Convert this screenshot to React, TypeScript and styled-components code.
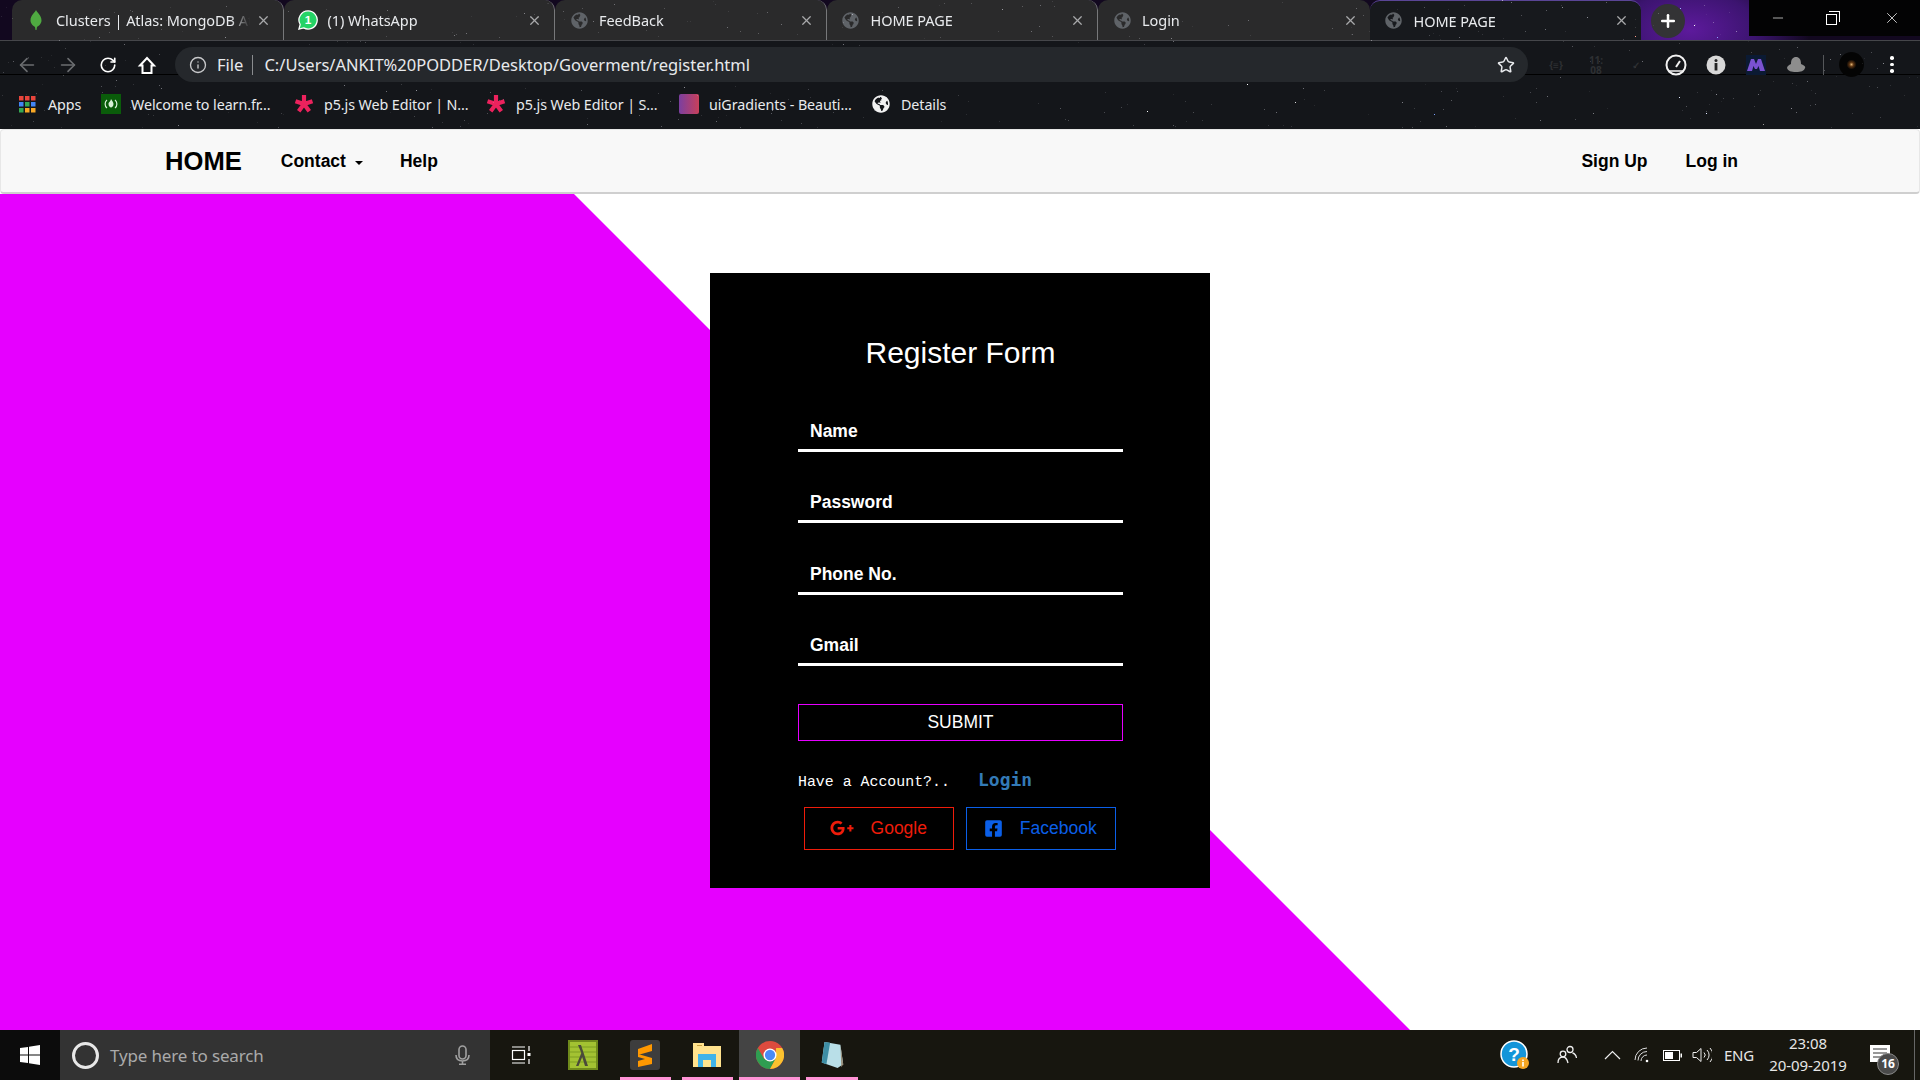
import React from "react";
import styled, { createGlobalStyle } from "styled-components";
import { ArrowLeft, ArrowRight, RotateCw, Info, Star, X, Minus, Plus } from "lucide-react";
import { FaGlobeAmericas, FaGooglePlusG, FaFacebookSquare } from "react-icons/fa";

const UI_FONT = `"Noto Sans", "Open Sans", sans-serif`;
const PAGE_FONT = `"Liberation Sans", Arial, sans-serif`;
const MAGENTA = "#e600ff";

const GlobalStyle = createGlobalStyle`
  html, body {
    margin: 0;
    padding: 0;
    background: #fff;
  }
  * {
    box-sizing: border-box;
  }
`;

// little seeded generator so the star field is the same on every load
const makeStars = (count: number): string => {
  let seed = 77;
  const next = () => {
    seed = (seed * 16807) % 2147483647;
    return seed / 2147483647;
  };
  const stars: string[] = [];
  for (let i = 0; i < count; i++) {
    const x = Math.round(next() * 1920);
    const y = Math.round(next() * 128);
    const alpha = next() * next() * 0.55 + 0.08;
    const inAddress = y > 45 && y < 84 && x > 170 && x < 1530;
    const inControls = y < 38 && x > 1748;
    if (!inAddress && !inControls) {
      stars.push(`${x}px ${y}px 0 0 rgba(235,235,245,${alpha.toFixed(2)})`);
    }
  }
  return stars
    .concat([
      "1147px 111px 0 0 #fff",
      "1679px 97px 0 0 #dfe8ff",
      "1434px 114px 0 0 #7aa0ff",
      "1706px 113px 0 0 #dfe8ff",
      "1763px 124px 0 0 #999",
      "1295px 102px 0 0 #ddd",
      "1247px 84px 0 0 #fff",
      "1635px 36px 0 0 #ff9b8a",
      "1680px 8px 0 0 #9db0ff",
      "1694px 25px 0 0 #fff",
      "1717px 37px 0 0 #8fa0ff",
    ])
    .join(",");
};

const Screen = styled.div`
  width: 1920px;
  height: 1080px;
  display: flex;
  flex-direction: column;
  overflow: hidden;
  background: #fff;
`;

/* ---------- browser chrome ---------- */

const BrowserChrome = styled.header`
  position: relative;
  height: 129px;
  flex: none;
  background: #14161a;
  font-family: ${UI_FONT};
  color: #e8eaed;
  overflow: hidden;

  &::after {
    content: "";
    position: absolute;
    top: 0;
    left: 0;
    width: 1px;
    height: 1px;
    box-shadow: ${makeStars(520)};
    pointer-events: none;
  }
`;

const TabStrip = styled.div`
  height: 41px;
  display: flex;
  padding-left: 12px;
  background: radial-gradient(
      ellipse 120px 70px at 1690px 30px,
      #5d1a9c 0%,
      #3c1470 55%,
      rgba(30, 12, 60, 0) 100%
    ),
    #12081f;
  border-bottom: 1px solid #45464a;
`;

const Tab = styled.div<{ $active?: boolean; $last?: boolean }>`
  width: 271.5px;
  height: 40px;
  padding: 0 12px 0 14px;
  display: flex;
  align-items: center;
  background: ${({ $active }) => ($active ? "#17191d" : "#2a2a2b")};
  border-radius: 10px 10px 0 0;
  border-top: ${({ $active }) => ($active ? "1px solid #5a4596" : "none")};
  border-right: ${({ $last }) => ($last ? "none" : "1px solid #77787a")};
  background-clip: padding-box;
`;

const TabIcon = styled.span`
  width: 20px;
  height: 20px;
  margin-right: 10px;
  flex: none;
  display: flex;
  align-items: center;
  justify-content: center;
  color: #5f6368;
`;

const TabTitle = styled.span`
  flex: 1;
  font-size: 14.5px;
  white-space: nowrap;
  overflow: hidden;
  letter-spacing: -0.05px;
  -webkit-mask-image: linear-gradient(to right, #000 90%, transparent 100%);
`;

const TabClose = styled(X)`
  flex: none;
  margin-left: 6px;
  color: #a8a9ab;
`;

const NewTab = styled.span`
  width: 34px;
  height: 34px;
  margin: 4px 0 0 10px;
  flex: none;
  border-radius: 50%;
  background: #333335;
  display: flex;
  align-items: center;
  justify-content: center;
  color: #fff;
`;

const WindowControls = styled.div`
  margin-left: auto;
  width: 171px;
  height: 36px;
  background: #030304;
  display: grid;
  grid-template-columns: repeat(3, 1fr);
  justify-items: center;
  align-items: center;
  color: #fff;
`;

const RestoreIcon = styled.span`
  position: relative;
  width: 11px;
  height: 11px;
  border: 1px solid #fff;
  background: #030304;
  margin: 3px 6px 0 0;

  &::before {
    content: "";
    position: absolute;
    top: -4px;
    right: -4px;
    width: 10px;
    height: 10px;
    border: 1px solid #fff;
    border-left: none;
    border-bottom: none;
  }
`;

const Toolbar = styled.div`
  height: 41px;
  display: flex;
  align-items: flex-start;
  padding-top: 6px;
  background: linear-gradient(
    to bottom,
    transparent 33px,
    #000 33px,
    #000 34px,
    transparent 34px
  );
`;

const NavButton = styled.span<{ $dim?: boolean; $width: number }>`
  width: ${({ $width }) => $width}px;
  height: 35px;
  flex: none;
  display: flex;
  align-items: center;
  justify-content: center;
  color: ${({ $dim }) => ($dim ? "#6b6d70" : "#fff")};
`;

const AddressBar = styled.div`
  width: 1353px;
  height: 35px;
  margin: 0 8px 0 15px;
  flex: none;
  padding: 0 13px 0 14px;
  display: flex;
  align-items: center;
  border-radius: 18px;
  background: #25282c;
  font-size: 16.5px;
  position: relative;
  z-index: 1;
`;

const AddressInfo = styled(Info)`
  color: #c8c9cb;
  margin-right: 10px;
`;

const FileLabel = styled.span`
  padding-right: 9px;
  margin-right: 11px;
  border-right: 1px solid #8a8c8f;
  line-height: 20px;
`;

const Url = styled.span`
  white-space: nowrap;
`;

const AddressStar = styled(Star)`
  margin-left: auto;
`;

const FadedBadge = styled.span`
  width: 40px;
  flex: none;
  text-align: center;
  font-size: 10px;
  line-height: 10px;
  color: #2e3033;
  align-self: center;
  font-weight: 700;
`;

const ExtensionSlot = styled.span`
  width: 40px;
  height: 35px;
  flex: none;
  display: flex;
  align-items: center;
  justify-content: center;
`;

const ToolbarDivider = styled.span`
  width: 1px;
  height: 20px;
  align-self: center;
  background: #55575a;
  flex: none;
  margin: 0 7px;
`;

const Avatar = styled.span`
  width: 25px;
  height: 25px;
  border-radius: 50%;
  background: radial-gradient(circle at 50% 50%, #e0b070 0, #5a3312 12%, #040404 28%);
`;

const MoreDots = styled.span`
  display: grid;
  gap: 3px;
  margin-left: 19px;
  align-self: center;

  i {
    display: block;
    width: 3.5px;
    height: 3.5px;
    background: #fff;
    border-radius: 50%;
  }
`;

const BookmarkBar = styled.nav`
  height: 46px;
  display: flex;
  align-items: center;
  padding: 0 0 2px 19px;
  font-size: 14.3px;
  letter-spacing: -0.08px;
`;

const Bookmark = styled.span<{ $width: number; $gap?: number }>`
  width: ${({ $width }) => $width}px;
  display: flex;
  align-items: center;
  gap: ${({ $gap }) => $gap ?? 10}px;
  flex: none;
  white-space: nowrap;
`;

const GradientIcon = styled.span`
  width: 20px;
  height: 20px;
  flex: none;
  border-radius: 2px;
  background: linear-gradient(to right, #7b3fa0, #c8405a);
`;

const WhiteGlobe = styled(FaGlobeAmericas)`
  color: #f2f2f2;
  flex: none;
`;

/* ---------- site navbar ---------- */

const Navbar = styled.div`
  height: 65px;
  flex: none;
  display: flex;
  align-items: center;
  padding: 0 181px 0 164px;
  background: #f8f8f8;
  border: 1px solid #e7e7e7;
  border-bottom: 2px solid #cfcfcf;
  border-radius: 4px;
  font-family: ${PAGE_FONT};
  font-weight: 700;
  font-size: 17.5px;
  color: #000;
`;

const Brand = styled.span`
  font-size: 25.6px;
  margin-right: 39px;
`;

const NavLink = styled.span<{ $gap: number }>`
  display: inline-flex;
  align-items: center;
  margin-right: ${({ $gap }) => $gap}px;
`;

const Caret = styled.span`
  width: 0;
  height: 0;
  margin-left: 9px;
  margin-top: 3px;
  border-top: 4px solid #000;
  border-left: 4.5px solid transparent;
  border-right: 4.5px solid transparent;
`;

const NavRight = styled.div`
  margin-left: auto;
  display: flex;
`;

/* ---------- page body ---------- */

const Hero = styled.main`
  position: relative;
  flex: 1;
  display: flex;
  justify-content: center;
  align-items: flex-start;
  padding-top: 79px;
  background: #fff;
  font-family: ${PAGE_FONT};

  &::before {
    content: "";
    position: absolute;
    inset: 0;
    background: ${MAGENTA};
    clip-path: polygon(0 0, 574px 0, 1410px 100%, 0 100%);
  }
`;

const Card = styled.section`
  position: relative;
  width: 500px;
  height: 615px;
  padding: 63px 87px 0 88px;
  display: flex;
  flex-direction: column;
  background: #000;
  color: #fff;
`;

const Title = styled.h1`
  margin: 0 0 42px;
  font-size: 30px;
  line-height: 34px;
  font-weight: 400;
  text-align: center;
`;

const Fields = styled.div`
  display: flex;
  flex-direction: column;
  gap: 31.33px;
`;

const Field = styled.div`
  height: 40px;
  padding: 0 0 6px 12px;
  display: flex;
  align-items: flex-end;
  border-bottom: 3px solid #fff;
  font-size: 17.5px;
  font-weight: 700;
  line-height: 24px;
`;

const Submit = styled.button`
  height: 37px;
  margin-top: 38px;
  padding: 0;
  background: #000;
  border: 1px solid ${MAGENTA};
  color: #fff;
  font-family: ${PAGE_FONT};
  font-size: 17.5px;
`;

const AccountRow = styled.div`
  height: 24px;
  margin-top: 27px;
  display: flex;
  align-items: center;
`;

const AccountText = styled.span`
  width: 180px;
  font-family: "Liberation Mono", "Courier New", monospace;
  font-size: 14.9px;
  padding-top: 4px;
`;

const LoginLink = styled.a`
  font-family: "DejaVu Sans Mono", "Liberation Mono", monospace;
  font-size: 18px;
  font-weight: 700;
  color: #337ab7;
`;

const SocialRow = styled.div`
  display: flex;
  gap: 12px;
  margin-top: 15px;
  padding: 0 7px 0 6px;
`;

const SocialButton = styled.button<{ $color: string }>`
  width: 150px;
  height: 43px;
  padding: 0 1px 0 0;
  display: flex;
  align-items: center;
  justify-content: center;
  gap: 16.5px;
  background: #000;
  border: 1px solid ${({ $color }) => $color};
  color: ${({ $color }) => $color};
  font-family: ${PAGE_FONT};
  font-size: 17.5px;
`;

/* ---------- taskbar ---------- */

const Taskbar = styled.footer`
  height: 50px;
  flex: none;
  display: flex;
  align-items: stretch;
  background: #17160f;
  font-family: ${UI_FONT};
  color: #e6e6e6;
`;

const StartButton = styled.span`
  width: 60px;
  flex: none;
  background: #0c0c0c;
  display: flex;
  align-items: center;
  justify-content: center;
`;

const SearchBox = styled.div`
  width: 430px;
  flex: none;
  background: #333;
  display: flex;
  align-items: center;
  padding-left: 12px;
  color: #aaa;
  font-size: 17px;
`;

const SearchRing = styled.span`
  width: 27px;
  height: 27px;
  margin-right: 11px;
  border: 3.5px solid #e8e8e8;
  border-radius: 50%;
  flex: none;
`;

const SearchText = styled.span`
  flex: 1;
  letter-spacing: -0.15px;
`;

const SearchMicWrap = styled.span`
  margin-right: 20px;
  display: flex;
`;

const TaskIcon = styled.span<{ $running?: boolean; $active?: boolean }>`
  position: relative;
  width: 61.25px;
  flex: none;
  margin-right: 1px;
  display: flex;
  align-items: center;
  justify-content: center;
  background: ${({ $active }) => ($active ? "#444" : "transparent")};

  &::after {
    content: "";
    display: ${({ $running }) => ($running ? "block" : "none")};
    position: absolute;
    left: ${({ $active }) => ($active ? 0 : 5)}px;
    right: ${({ $active }) => ($active ? 0 : 5)}px;
    bottom: 0;
    height: 3px;
    background: #ff93d6;
  }
`;

const Tray = styled.div`
  margin-left: auto;
  display: flex;
  align-items: center;
`;

const TraySlot = styled.span<{ $width: number }>`
  width: ${({ $width }) => $width}px;
  flex: none;
  display: flex;
  align-items: center;
  justify-content: center;
`;

const Lang = styled.span`
  width: 42px;
  margin: 0 2px 0 1px;
  font-size: 15px;
  letter-spacing: -0.2px;
  text-align: center;
  flex: none;
`;

const Clock = styled.div`
  width: 92px;
  flex: none;
  padding-bottom: 2px;
  text-align: center;
  font-size: 15px;
  line-height: 22px;
  letter-spacing: -0.1px;
`;

const NotifyWrap = styled.span`
  position: relative;
  width: 60px;
  height: 50px;
  flex: none;
  display: flex;
  align-items: center;
  justify-content: center;
  padding: 0 8px 3px 0;
`;

const NotifyBadge = styled.span`
  position: absolute;
  left: 23px;
  top: 23px;
  width: 22px;
  height: 22px;
  border-radius: 50%;
  background: #4a4a4a;
  border: 1px solid #888;
  color: #fff;
  font-size: 12px;
  font-weight: 700;
  line-height: 19px;
  text-align: center;
`;

const EndStrip = styled.span`
  width: 1px;
  height: 50px;
  background: #666;
  margin-right: 5px;
  flex: none;
`;

/* ---------- drawn icons ---------- */

const MongoLeaf = () => (
  <svg width="12" height="20" viewBox="0 0 12 20">
    <path d="M6 0c1 2.500 5.500 5 5.500 10.500 0 3.500-3 5.500-4.500 6.500l-.5 3h-1l-.5-3C3.500 16 .5 14 .5 10.500.5 5 5 2.500 6 0z" fill="#4faa41" />
  </svg>
);

const WhatsappIcon = () => (
  <svg width="22" height="22" viewBox="0 0 22 22">
    <path d="M11 1a10 10 0 0 0-8.600 15L1 21l5.200-1.300A10 10 0 1 0 11 1z" fill="#25d366" stroke="#fff" strokeWidth="1.400" />
    <text x="11" y="15.500" textAnchor="middle" fontSize="13" fontWeight="700" fill="#fff" fontFamily="Liberation Sans">1</text>
  </svg>
);

const HomeOutline = () => (
  <svg width="20" height="20" viewBox="0 0 20 20" fill="none" stroke="#fff" strokeWidth="2" strokeLinejoin="miter">
    <path d="M3 10.500L10 3l7 7.500h-2.500V18h-9v-7.500z" />
  </svg>
);

const AppsGrid = () => {
  const colors = ["#e8453c", "#e8453c", "#e8453c", "#4285f4", "#34a853", "#4285f4", "#34a853", "#f9a825", "#f9a825"];
  return (
    <svg width="17" height="17" viewBox="0 0 17 17">
      {colors.map((c, i) => (
        <rect key={i} x={(i % 3) * 6} y={Math.floor(i / 3) * 6} width="4.500" height="4.500" fill={c} />
      ))}
    </svg>
  );
};

const FreeCodeIcon = () => (
  <svg width="20" height="20" viewBox="0 0 20 20" fill="none">
    <rect width="20" height="20" fill="#0a5c0a" />
    <path d="M6 6c-2.500 2-2.500 6 0 8M14 6c2.500 2 2.500 6 0 8" stroke="#d7f0d7" strokeWidth="1.200" />
    <path d="M10 5c1 2 2.500 3 2.500 5S11 13.500 10 13.500 7.500 12 7.500 10 9.500 8 10 5z" fill="#d7f0d7" />
  </svg>
);

const P5Star = () => (
  <svg width="20" height="20" viewBox="0 0 20 20" stroke="#ed225d" strokeWidth="4.200">
    <path d="M10 1v9M10 10l8.500-2.800M10 10l5.300 7.300M10 10l-5.300 7.300M10 10L1.500 7.200" />
  </svg>
);

const Speedo = () => (
  <svg width="22" height="22" viewBox="0 0 22 22" fill="none">
    <circle cx="11" cy="11" r="9.500" stroke="#f2f2f2" strokeWidth="2" />
    <path d="M11 13l4-6" stroke="#f2f2f2" strokeWidth="2" />
    <path d="M3 17h16" stroke="#f2f2f2" strokeWidth="1.500" />
  </svg>
);

const InfoBadge = () => (
  <svg width="20" height="20" viewBox="0 0 20 20">
    <circle cx="10" cy="10" r="9.500" fill="#d8d8d8" />
    <rect x="8.600" y="8" width="2.800" height="7.500" fill="#222" />
    <circle cx="10" cy="5.500" r="1.500" fill="#222" />
  </svg>
);

const MBadge = () => (
  <svg width="20" height="20" viewBox="0 0 20 20">
    <rect width="20" height="20" fill="#0b1a33" />
    <path d="M1 16L5 4h3l2 5 2-5h3l4 12h-5l-1.500-5-1.500 3H9l-1.500-3L6 16z" fill="#7a52d0" />
  </svg>
);

const Hat = () => (
  <svg width="20" height="16" viewBox="0 0 20 16">
    <path d="M5 7C5 2 7 0 10 0s5 2 5 7c3 1 5 3 4 4-1 3-4 4-9 4-5 0-8-1-9-4 0-2 2-3 4-4z" fill="#8d8d8d" />
  </svg>
);

const WindowsLogo = () => (
  <svg width="20" height="20" viewBox="0 0 20 20" fill="#fff">
    <path d="M0 3l8-1.100v7.600H0zM9 1.700L20 0v9.500H9zM0 10.500h8v7.600L0 17zM9 10.500h11V20L9 18.300z" />
  </svg>
);

const MicIcon = () => (
  <svg width="15" height="20" viewBox="0 0 15 20" fill="none" stroke="#a0a0a0" strokeWidth="1.600">
    <rect x="4" y="1" width="7" height="13" rx="3.500" />
    <path d="M1 10c0 4 2.500 6 6.500 6s6.500-2 6.500-6M7.500 16v3M4 19.200h7" />
  </svg>
);

const TaskView = () => (
  <svg width="20" height="20" viewBox="0 0 20 20" fill="none" stroke="#fff" strokeWidth="1.200">
    <rect x="1.500" y="5.500" width="12" height="9" />
    <path d="M1 2h13M1 18h13M18 1v5M18 14v5" />
    <rect x="16.500" y="8" width="3" height="3" fill="#fff" stroke="none" />
  </svg>
);

const LambdaIcon = () => (
  <svg width="30" height="30" viewBox="0 0 30 30">
    <rect width="30" height="30" fill="#6f8a1b" />
    <rect x="2" y="2" width="26" height="26" fill="#a3c232" />
    <path d="M2 7h26M2 12h26M2 17h26M2 22h26" stroke="#8bab27" strokeWidth="1.600" />
    <path d="M10 5h3l7 21h-3l-2.800-9L10.500 26H8l5.300-13z" fill="#4a4a3a" />
  </svg>
);

const SublimeIcon = () => (
  <svg width="30" height="30" viewBox="0 0 30 30">
    <rect width="30" height="30" rx="3" fill="#3d3d3d" />
    <path d="M22 4v7L8 15V9zM8 14l14 4v6L8 27v-6l7-2-7-2z" fill="#ff9800" />
  </svg>
);

const FolderIcon = () => (
  <svg width="28" height="24" viewBox="0 0 28 24">
    <path d="M0 0h11v3h17v21H0z" fill="#ffe28d" />
    <path d="M4 2h5v1H4z" fill="#c9a040" />
    <path d="M5 11h18v13h-5v-7h-8v7H5z" fill="#3fb3ea" />
  </svg>
);

const ChromeIcon = () => (
  <svg width="28" height="28" viewBox="-15 -15 30 30">
    <circle r="15" fill="#dd4b3e" />
    <path d="M-13 -7.500A15 15 0 0 0 0 15L6.500 3.800 0 7.000-6.500 3.800z" fill="#2f9e51" />
    <path d="M13-7.500A15 15 0 0 1 0 15L6 4 6.500-7.500z" fill="#fbc22f" />
    <circle r="7" fill="#fff" />
    <circle r="5.500" fill="#4b8bf5" />
  </svg>
);

const NotesIcon = () => (
  <svg width="28" height="28" viewBox="0 0 28 30">
    <path d="M6 1l17 3 3 21-6 4-17-6z" fill="#b9dfe8" />
    <path d="M3 23l3-22 6 1-4 23z" fill="#3e8ea5" />
    <path d="M23 4l3 21-2 3z" fill="#9a8f7a" />
  </svg>
);

const HelpIcon = () => (
  <svg width="30" height="30" viewBox="0 0 30 30">
    <circle cx="14" cy="14" r="13" fill="#1495d9" stroke="#fff" strokeWidth="1.500" />
    <text x="14" y="20.500" textAnchor="middle" fontSize="19" fontWeight="700" fill="#fff" fontFamily="Liberation Sans">?</text>
    <circle cx="23" cy="23" r="6" fill="#f5a623" />
    <rect x="22.200" y="22" width="1.600" height="4.500" fill="#fff" />
    <rect x="22.200" y="19.500" width="1.600" height="1.600" fill="#fff" />
  </svg>
);

const PeopleIcon = () => (
  <svg width="20" height="20" viewBox="0 0 20 20" fill="none" stroke="#eee" strokeWidth="1.300">
    <circle cx="13" cy="4.500" r="3" />
    <circle cx="6" cy="9" r="2.800" />
    <path d="M1 18c0-4 2-6 5-6s4 2 5 6M15.500 8c2 .5 3.500 2 4 5" />
  </svg>
);

const ChevronIcon = () => (
  <svg width="17" height="10" viewBox="0 0 17 10" fill="none" stroke="#eee" strokeWidth="1.200">
    <path d="M1 9l7.500-7.500L16 9" />
  </svg>
);

const WifiIcon = () => (
  <svg width="16" height="16" viewBox="0 0 16 16" fill="none" stroke="#ddd" strokeWidth="1">
    <path d="M1 13a12 12 0 0 1 12-12M4 13.500a9 9 0 0 1 9-9M7 14a6 6 0 0 1 6-6" />
    <circle cx="13" cy="14" r="1.300" fill="#fff" stroke="none" />
  </svg>
);

const BatteryIcon = () => (
  <svg width="19" height="11" viewBox="0 0 19 11">
    <rect x="0.500" y="0.500" width="16" height="10" fill="none" stroke="#fff" />
    <rect x="2" y="2" width="8" height="7" fill="#fff" />
    <rect x="17.500" y="3.500" width="1.500" height="4" fill="#fff" />
  </svg>
);

const SpeakerIcon = () => (
  <svg width="20" height="16" viewBox="0 0 20 16" fill="none" stroke="#eee" strokeWidth="1">
    <path d="M1 5.500h3.500L9 1.500v13l-4.500-4H1z" />
    <path d="M12 5.500a3.500 3.500 0 0 1 0 5M15 3a7 7 0 0 1 0 10M18 1a10 10 0 0 1 0 14" />
  </svg>
);

const NotifyIcon = () => (
  <svg width="20" height="17" viewBox="0 0 20 17">
    <rect width="20" height="17" fill="#fff" />
    <path d="M3 4h14M3 8h14M3 12h9" stroke="#333" strokeWidth="1.100" />
  </svg>
);

/* ---------- data ---------- */

const TABS: { title: string; icon: React.ReactNode }[] = [
  { title: "Clusters | Atlas: MongoDB Atlas", icon: <MongoLeaf /> },
  { title: "(1) WhatsApp", icon: <WhatsappIcon /> },
  { title: "FeedBack", icon: <FaGlobeAmericas size={17} /> },
  { title: "HOME PAGE", icon: <FaGlobeAmericas size={17} /> },
  { title: "Login", icon: <FaGlobeAmericas size={17} /> },
  { title: "HOME PAGE", icon: <FaGlobeAmericas size={17} /> },
];

const FIELDS = ["Name", "Password", "Phone No.", "Gmail"];

const App = () => (
  <Screen>
    <GlobalStyle />
    <BrowserChrome>
      <TabStrip>
        {TABS.map((tab, i) => (
          <Tab key={i} $active={i === 5} $last={i >= 4}>
            <TabIcon>{tab.icon}</TabIcon>
            <TabTitle>{tab.title}</TabTitle>
            <TabClose size={15} strokeWidth={2} />
          </Tab>
        ))}
        <NewTab>
          <Plus size={20} strokeWidth={3} />
        </NewTab>
        <WindowControls>
          <Minus size={16} strokeWidth={1} />
          <RestoreIcon />
          <X size={18} strokeWidth={1} />
        </WindowControls>
      </TabStrip>

      <Toolbar>
        <NavButton $dim $width={54}>
          <ArrowLeft size={22} strokeWidth={1.8} />
        </NavButton>
        <NavButton $dim $width={28}>
          <ArrowRight size={22} strokeWidth={1.8} />
        </NavButton>
        <NavButton $width={52}>
          <RotateCw size={18} strokeWidth={2.2} />
        </NavButton>
        <NavButton $width={26}>
          <HomeOutline />
        </NavButton>
        <AddressBar>
          <AddressInfo size={18} strokeWidth={1.8} />
          <FileLabel>File</FileLabel>
          <Url>C:/Users/ANKIT%20PODDER/Desktop/Goverment/register.html</Url>
          <AddressStar size={18} strokeWidth={2} />
        </AddressBar>
        <FadedBadge>{"{≡}"}</FadedBadge>
        <FadedBadge>
          11:
          <br />
          08
        </FadedBadge>
        <FadedBadge>✓</FadedBadge>
        <ExtensionSlot>
          <Speedo />
        </ExtensionSlot>
        <ExtensionSlot>
          <InfoBadge />
        </ExtensionSlot>
        <ExtensionSlot>
          <MBadge />
        </ExtensionSlot>
        <ExtensionSlot>
          <Hat />
        </ExtensionSlot>
        <ToolbarDivider />
        <ExtensionSlot>
          <Avatar />
        </ExtensionSlot>
        <MoreDots>
          <i />
          <i />
          <i />
        </MoreDots>
      </Toolbar>

      <BookmarkBar>
        <Bookmark $width={82} $gap={12}>
          <AppsGrid />
          Apps
        </Bookmark>
        <Bookmark $width={193}>
          <FreeCodeIcon />
          Welcome to learn.fr...
        </Bookmark>
        <Bookmark $width={192}>
          <P5Star />
          p5.js Web Editor | N...
        </Bookmark>
        <Bookmark $width={193}>
          <P5Star />
          p5.js Web Editor | S...
        </Bookmark>
        <Bookmark $width={193}>
          <GradientIcon />
          uiGradients - Beauti...
        </Bookmark>
        <Bookmark $width={70} $gap={11}>
          <WhiteGlobe size={18} />
          Details
        </Bookmark>
      </BookmarkBar>
    </BrowserChrome>

    <Navbar>
      <Brand>HOME</Brand>
      <NavLink $gap={37}>
        Contact
        <Caret />
      </NavLink>
      <NavLink $gap={0}>Help</NavLink>
      <NavRight>
        <NavLink $gap={38}>Sign Up</NavLink>
        <NavLink $gap={0}>Log in</NavLink>
      </NavRight>
    </Navbar>

    <Hero>
      <Card>
        <Title>Register Form</Title>
        <Fields>
          {FIELDS.map((name) => (
            <Field key={name}>{name}</Field>
          ))}
        </Fields>
        <Submit>SUBMIT</Submit>
        <AccountRow>
          <AccountText>Have a Account?..</AccountText>
          <LoginLink>Login</LoginLink>
        </AccountRow>
        <SocialRow>
          <SocialButton $color="#ee1c0a">
            <FaGooglePlusG size={24} />
            Google
          </SocialButton>
          <SocialButton $color="#0b5fe8">
            <FaFacebookSquare size={19} />
            Facebook
          </SocialButton>
        </SocialRow>
      </Card>
    </Hero>

    <Taskbar>
      <StartButton>
        <WindowsLogo />
      </StartButton>
      <SearchBox>
        <SearchRing />
        <SearchText>Type here to search</SearchText>
        <SearchMicWrap>
          <MicIcon />
        </SearchMicWrap>
      </SearchBox>
      <TaskIcon>
        <TaskView />
      </TaskIcon>
      <TaskIcon>
        <LambdaIcon />
      </TaskIcon>
      <TaskIcon $running>
        <SublimeIcon />
      </TaskIcon>
      <TaskIcon $running>
        <FolderIcon />
      </TaskIcon>
      <TaskIcon $running $active>
        <ChromeIcon />
      </TaskIcon>
      <TaskIcon $running>
        <NotesIcon />
      </TaskIcon>
      <Tray>
        <TraySlot $width={44}>
          <HelpIcon />
        </TraySlot>
        <TraySlot $width={60}>
          <PeopleIcon />
        </TraySlot>
        <TraySlot $width={30}>
          <ChevronIcon />
        </TraySlot>
        <TraySlot $width={30}>
          <WifiIcon />
        </TraySlot>
        <TraySlot $width={30}>
          <BatteryIcon />
        </TraySlot>
        <TraySlot $width={30}>
          <SpeakerIcon />
        </TraySlot>
        <Lang>ENG</Lang>
        <Clock>
          23:08
          <br />
          20-09-2019
        </Clock>
        <NotifyWrap>
          <NotifyIcon />
          <NotifyBadge>16</NotifyBadge>
        </NotifyWrap>
        <EndStrip />
      </Tray>
    </Taskbar>
  </Screen>
);

export default App;
